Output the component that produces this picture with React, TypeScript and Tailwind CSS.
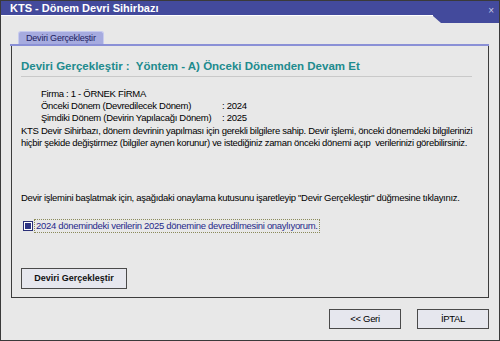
export default function App() {
  return (
    <div
      className="w-[500px] h-[341px] bg-[#e8e8e8] border border-[#3a3a3a] flex flex-col text-[9.5px] tracking-[-0.3px] text-black overflow-hidden"
      style={{ fontFamily: '"Liberation Sans", Arial, sans-serif' }}
    >
      {/* title bar */}
      <div className="flex items-start h-[22px] tracking-normal">
        <div className="flex-1 h-[15px] bg-[#434a9c] border-b border-white flex items-center pl-[9px] text-white font-bold text-[11px]">
          KTS - Dönem Devri Sihirbazı
        </div>
        <div className="w-[66px] h-[22px] bg-[#434a9c] [clip-path:polygon(0_0,100%_0,100%_100%,8px_100%,0_15px)] flex items-start justify-end pr-[5px] pt-[2px] text-[#c8cbe6] text-[10px]">
          ×
        </div>
      </div>

      {/* tab strip */}
      <div className="flex pl-[17px] mt-[8px]">
        <div className="h-[13px] px-[7px] bg-[#a6abdf] border-t border-x border-[#c7cbee] rounded-t-[3px] text-[#1c2160] text-[9px] tracking-[-0.2px] leading-[12px]">
          Deviri Gerçekleştir
        </div>
      </div>
      <div className="ml-[9px] mr-[10px] h-[2px] bg-[#8a90d6]" />

      {/* panel */}
      <div className="ml-[10px] mr-[10px] h-[252px] border-l border-r border-b border-[#3c3c3c] flex flex-col pl-[9px] pr-[16px] pt-[12px]">
        <div className="text-[#218b8e] font-bold text-[11.5px] tracking-normal leading-[16px] pb-[2px] border-b border-[#c9c9c9] whitespace-pre">
          {'Deviri Gerçekleştir :  Yöntem - A) Önceki Dönemden Devam Et'}
        </div>

        <div className="pl-[20px] mt-[11px] leading-[12px] grid grid-cols-[181px_auto] whitespace-nowrap">
          <div className="col-span-2">Firma : 1 - ÖRNEK FİRMA</div>
          <div>Önceki Dönem (Devredilecek Dönem)</div>
          <div>: 2024</div>
          <div>Şimdiki Dönem (Devirin Yapılacağı Dönem)</div>
          <div>: 2025</div>
        </div>

        <div className="mt-[1px] leading-[12px] whitespace-pre">
          {'KTS Devir Sihirbazı, dönem devrinin yapılması için gerekli bilgilere sahip. Devir işlemi, önceki dönemdeki bilgilerinizi\nhiçbir şekide değiştirmez (bilgiler aynen korunur) ve istediğiniz zaman önceki dönemi açıp  verilerinizi görebilirsiniz.'}
        </div>

        <div className="mt-[43px] leading-[12px] whitespace-nowrap">
          Devir işlemini başlatmak için, aşağıdaki onaylama kutusunu işaretleyip "Devir Gerçekleştir" düğmesine tıklayınız.
        </div>

        <div className="mt-[15px] flex items-center">
          <div className="ml-[2px] w-[10px] h-[10px] border border-[#2a2f77] bg-white p-[1px]">
            <div className="w-full h-full bg-[#2f3585]" />
          </div>
          <div className="ml-[1px] px-[1px] border border-dotted border-[#8a8a5a] text-[#26288a] leading-[12px] whitespace-nowrap">
            2024 dönemindeki verilerin 2025 dönemine devredilmesini onaylıyorum.
          </div>
        </div>

        <div className="mt-[35px]">
          <button className="w-[106px] h-[21px] border border-[#4a4a4a] bg-[#e6e7ee] font-bold text-[9px] tracking-normal text-[#111]">
            Deviri Gerçekleştir
          </button>
        </div>
      </div>

      {/* footer buttons */}
      <div className="flex justify-end gap-[16px] pr-[10px] mt-[11px]">
        <button className="w-[72px] h-[20px] border border-[#4a4a4a] bg-[#e6e7ee] text-[9.5px]">{'<< Geri'}</button>
        <button className="w-[72px] h-[20px] border border-[#4a4a4a] bg-[#e6e7ee] text-[9.5px]">İPTAL</button>
      </div>
    </div>
  )
}
